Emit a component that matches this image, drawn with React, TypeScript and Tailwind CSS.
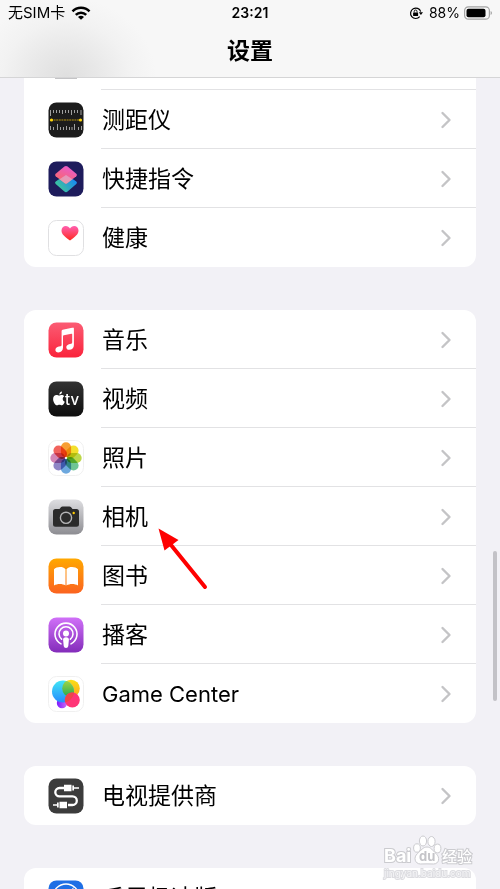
import type { ReactNode } from 'react';

interface SettingsItem {
  label: string;
  icon: ReactNode;
}

/* ---------- app icons ---------- */

function MeasureIcon() {
  return (
    <svg viewBox="0 0 36 36" className="h-9 w-9" aria-hidden="true">
      <rect x="0.5" y="0.5" width="35" height="35" rx="8" fill="#1c1c1c" />
      <path
        d="M2.5 8v6M5.5 8v3M8.5 8v3M11.5 8v3M14.5 8v4M17.5 8v3M20.5 8v3M23.5 8v5M26.5 8v3M29.5 8v3M33 8v5"
        stroke="#a0a0a0"
        strokeWidth="1"
      />
      <path
        d="M2.5 28v-4M5.5 28v-3M9.5 28v-6M12.5 28v-3M15.5 28v-3M18.5 28v-4M21.5 28v-3M24 28v-3M26.5 28v-6M30.5 28v-3M33.5 28v-4"
        stroke="#a0a0a0"
        strokeWidth="1"
      />
      <path d="M3 18h30" stroke="#b8930f" strokeWidth="1" strokeDasharray="2 0.6" />
      <circle cx="3.5" cy="18" r="1.6" fill="#ffd60a" />
      <circle cx="32.5" cy="18" r="1.6" fill="#ffd60a" />
    </svg>
  );
}

function ShortcutsIcon() {
  return (
    <svg viewBox="0 0 36 36" className="h-9 w-9" aria-hidden="true">
      <defs>
        <linearGradient id="sc-low" x1="0" y1="0.8" x2="1" y2="0.2">
          <stop offset="0" stopColor="#3fd08f" />
          <stop offset="0.5" stopColor="#2fa5c4" />
          <stop offset="1" stopColor="#1283ff" />
        </linearGradient>
        <linearGradient id="sc-top" x1="0.2" y1="1" x2="0.7" y2="0">
          <stop offset="0" stopColor="#fb6a5c" />
          <stop offset="1" stopColor="#e95ad0" />
        </linearGradient>
      </defs>
      <rect x="0.5" y="0.5" width="35" height="35" rx="8" fill="#1e1c5c" />
      <path d="M19.500 14.400 28.300 20.600q1.400 1.100 0 2.300L19.600 30.600q-1.600 1.200-3.200 0L7.700 22.900q-1.400-1.200 0-2.300L16.500 14.400q1.500-.8 3 0z" fill="url(#sc-low)" />
      <path d="M19.600 5.600 28.300 12.800q1.400 1.200 0 2.400L19.600 22.100q-1.600 1.200-3.200 0L7.700 15.200q-1.400-1.200 0-2.400L16.400 5.600q1.600-1.200 3.200 0z" fill="url(#sc-top)" />
      <path d="M18 14 24.500 18.200 19.600 22.100q-1.600 1.200-3.200 0L11.500 18.200z" fill="#d9c3e0" opacity="0.55" />
    </svg>
  );
}

function HealthIcon() {
  return (
    <svg viewBox="0 0 36 36" className="h-9 w-9" aria-hidden="true">
      <defs>
        <linearGradient id="heart" x1="0" y1="0" x2="0" y2="1">
          <stop offset="0" stopColor="#ff5fb0" />
          <stop offset="1" stopColor="#ff2a20" />
        </linearGradient>
      </defs>
      <rect x="0.5" y="0.5" width="35" height="35" rx="8" fill="#fff" stroke="#e0e0e2" />
      <path d="M22 20.500c-5-3.500-8.500-6.200-8.500-10 0-2.600 1.900-4.500 4.300-4.500 1.800 0 3.300.9 4.200 2.500C22.900 6.900 24.400 6 26.200 6c2.400 0 4.300 1.900 4.300 4.500 0 3.800-3.500 6.500-8.500 10z" fill="url(#heart)" />
    </svg>
  );
}

function MusicIcon() {
  return (
    <svg viewBox="0 0 36 36" className="h-9 w-9" aria-hidden="true">
      <defs>
        <linearGradient id="music" x1="0" y1="0" x2="0" y2="1">
          <stop offset="0" stopColor="#fb5c74" />
          <stop offset="1" stopColor="#fa233b" />
        </linearGradient>
      </defs>
      <rect x="0.5" y="0.5" width="35" height="35" rx="8" fill="url(#music)" />
      <path d="M25.300 5.500 14.600 7.800q-1 .2-1 1.200v14q0 1-1 1.200l-1.700.4c-2.200.5-3.500 1.700-3.500 3.300 0 1.500 1.200 2.500 2.900 2.500 3 0 4.700-2 4.700-4.800V14.300q0-.8.8-1l7.600-1.600q.8-.2.800.6v8.200q0 1-1 1.200l-1.300.3c-2.200.5-3.600 1.600-3.600 3.200 0 1.600 1.200 2.600 2.900 2.600 2.900 0 4.700-2 4.700-4.800V6.500q0-1.200-1.100-1z" fill="#fff" />
    </svg>
  );
}

function TvIcon() {
  return (
    <svg viewBox="0 0 36 36" className="h-9 w-9" aria-hidden="true">
      <defs>
        <linearGradient id="tv" x1="0" y1="0" x2="0" y2="1">
          <stop offset="0" stopColor="#333" />
          <stop offset="1" stopColor="#0e0e0e" />
        </linearGradient>
      </defs>
      <rect x="0.5" y="0.5" width="35" height="35" rx="8" fill="url(#tv)" />
      <path d="M11.200 14.500c.9 0 1.500-.6 2.500-.6 1 0 2 .5 2.600 1.400-2.300 1.300-1.900 4.600.5 5.500-.6 1.700-1.800 3.500-3 3.500-.9 0-1.300-.5-2.400-.5s-1.500.5-2.400.5c-1.700 0-3.900-3.400-3.900-6.400 0-2.600 1.600-4 3.400-4 1.100 0 1.900.6 2.700.6z" fill="#fff" />
      <path d="M11.300 13.600c-.1-1.700 1.200-3 2.700-3.100.2 1.700-1.300 3.100-2.700 3.100z" fill="#fff" />
      <text x="17" y="24" fontSize="15" fontWeight="500" fill="#fff" fontFamily="Inter, sans-serif">tv</text>
    </svg>
  );
}

const petals = [
  { angle: 0, color: '#f7941d' },
  { angle: 45, color: '#f2dc16' },
  { angle: 90, color: '#b5d334' },
  { angle: 135, color: '#5fbf8a' },
  { angle: 180, color: '#5d9fdb' },
  { angle: 225, color: '#8379c0' },
  { angle: 270, color: '#d07aae' },
  { angle: 315, color: '#f0524b' },
];

function PhotosIcon() {
  return (
    <svg viewBox="0 0 36 36" className="h-9 w-9" aria-hidden="true">
      <rect x="0.5" y="0.5" width="35" height="35" rx="8" fill="#fff" stroke="#f0f0f0" />
      <g transform="translate(18 18)">
        {petals.map((petal) => (
          <rect
            key={petal.angle}
            x="-5.1"
            y="-15.7"
            width="10.2"
            height="15"
            rx="5.1"
            fill={petal.color}
            opacity="0.9"
            transform={`rotate(${petal.angle})`}
            className="mix-blend-multiply"
          />
        ))}
        <circle r="1" fill="#fff" />
      </g>
    </svg>
  );
}

function CameraIcon() {
  return (
    <svg viewBox="0 0 36 36" className="h-9 w-9" aria-hidden="true">
      <defs>
        <linearGradient id="camera" x1="0" y1="0" x2="0" y2="1">
          <stop offset="0" stopColor="#dedee1" />
          <stop offset="1" stopColor="#8d8d92" />
        </linearGradient>
      </defs>
      <rect x="0.5" y="0.5" width="35" height="35" rx="8" fill="url(#camera)" />
      <path d="M7.500 10h4l1.600-1.900q.6-.6 1.400-.6h7q.8 0 1.400.6L24.500 10h4q2.500 0 2.500 2.500v12.700q0 2.500-2.500 2.500h-21Q5 27.700 5 25.200V12.500Q5 10 7.500 10z" fill="#2b2b2b" />
      <circle cx="18" cy="18.800" r="5.600" fill="none" stroke="#b4b4b6" strokeWidth="1.400" />
      <circle cx="25.700" cy="14" r="1.200" fill="#ffcc00" />
    </svg>
  );
}

function BooksIcon() {
  return (
    <svg viewBox="0 0 36 36" className="h-9 w-9" aria-hidden="true">
      <defs>
        <linearGradient id="books" x1="0" y1="0" x2="0" y2="1">
          <stop offset="0" stopColor="#ffa800" />
          <stop offset="1" stopColor="#fb6320" />
        </linearGradient>
      </defs>
      <rect x="0.5" y="0.5" width="35" height="35" rx="8" fill="url(#books)" />
      <path d="M17.500 11.200C16.300 9.600 14.200 9 12 9c-2.400 0-4.600.7-6 2.200v16.300c1.600-1 3.700-1.500 5.800-1.500 2.200 0 4.200.5 5.700 1.500z" fill="#fff" />
      <path d="M18.500 11.200C19.700 9.600 21.800 9 24 9c2.400 0 4.600.7 6 2.200v16.300c-1.600-1-3.700-1.500-5.800-1.500-2.200 0-4.200.5-5.700 1.500z" fill="#fff" />
    </svg>
  );
}

function PodcastsIcon() {
  return (
    <svg viewBox="0 0 36 36" className="h-9 w-9" aria-hidden="true">
      <defs>
        <linearGradient id="podcasts" x1="0" y1="0" x2="0" y2="1">
          <stop offset="0" stopColor="#d070f8" />
          <stop offset="1" stopColor="#832cba" />
        </linearGradient>
      </defs>
      <rect x="0.5" y="0.5" width="35" height="35" rx="8" fill="url(#podcasts)" />
      <g fill="none" stroke="#fff" strokeWidth="1.600" strokeLinecap="round">
        <path d="M13 26.900a11 11 0 1 1 10 0" />
        <path d="M13.600 22.200a7 7 0 1 1 8.800 0" />
      </g>
      <circle cx="18" cy="16.500" r="3" fill="#fff" />
      <path d="M18 20.300c2 0 3 .9 2.900 2.500l-.6 6.200q-.3 2-2.300 2t-2.300-2l-.6-6.200c-.1-1.600.9-2.500 2.900-2.500z" fill="#fff" />
    </svg>
  );
}

function GameCenterIcon() {
  return (
    <svg viewBox="0 0 36 36" className="h-9 w-9" aria-hidden="true">
      <defs>
        <linearGradient id="gc-blue" x1="0" y1="0" x2="0" y2="1">
          <stop offset="0" stopColor="#42e6f5" />
          <stop offset="1" stopColor="#268bfd" />
        </linearGradient>
        <linearGradient id="gc-yellow" x1="0" y1="0" x2="0" y2="1">
          <stop offset="0" stopColor="#f9e016" />
          <stop offset="1" stopColor="#ffa31c" />
        </linearGradient>
        <linearGradient id="gc-green" x1="0" y1="0" x2="0" y2="1">
          <stop offset="0" stopColor="#a9d645" />
          <stop offset="1" stopColor="#1faa50" />
        </linearGradient>
        <linearGradient id="gc-purple" x1="0" y1="0" x2="1" y2="0">
          <stop offset="0" stopColor="#7a1cff" />
          <stop offset="1" stopColor="#cf6bf5" />
        </linearGradient>
        <clipPath id="gc-clip">
          <circle cx="15" cy="15.500" r="11" />
        </clipPath>
      </defs>
      <rect x="0.5" y="0.5" width="35" height="35" rx="8" fill="#fff" stroke="#f0f0f0" />
      <circle cx="14" cy="27" r="5.200" fill="url(#gc-purple)" />
      <circle cx="23" cy="12.500" r="8.800" fill="url(#gc-yellow)" />
      <circle cx="15" cy="15.500" r="11" fill="url(#gc-blue)" />
      <circle cx="23" cy="12.500" r="8.800" fill="url(#gc-green)" clipPath="url(#gc-clip)" />
      <circle cx="24.300" cy="24" r="7.500" fill="#ff3577" />
      <circle cx="24.300" cy="24" r="7.500" fill="#ef4549" clipPath="url(#gc-clip)" />
    </svg>
  );
}

function TvProviderIcon() {
  return (
    <svg viewBox="0 0 36 36" className="h-9 w-9" aria-hidden="true">
      <rect x="0.5" y="0.5" width="35" height="35" rx="8" fill="#3c3c3c" />
      <path d="M16 10h-4.500a4.200 4.200 0 0 0 0 8.400h13a4.300 4.300 0 0 1 0 8.600H20" fill="none" stroke="#fff" strokeWidth="2.300" />
      <path d="M16 6.800h7.500v6.400H16zM24.300 7.500h1.700v5h-1.700zM26 9.300h5v1.400h-5z" fill="#fff" />
      <path d="M11.500 23.800H19v6.400h-7.500zM9 24.500h1.700v5H9zM5 26.300h4v1.400H5z" fill="#fff" />
    </svg>
  );
}

function BrowserIcon() {
  return (
    <svg viewBox="0 0 36 36" className="h-9 w-9" aria-hidden="true">
      <rect x="0.5" y="0.5" width="35" height="35" rx="8" fill="#1f6fe5" />
      <circle cx="18" cy="17" r="13" fill="none" stroke="#fff" strokeWidth="1.300" />
      <path d="M26 7 20.500 21 16 16z" fill="#fff" />
    </svg>
  );
}

/* ---------- list ---------- */

const groups: SettingsItem[][] = [
  [
    { label: '测距仪', icon: <MeasureIcon /> },
    { label: '快捷指令', icon: <ShortcutsIcon /> },
    { label: '健康', icon: <HealthIcon /> },
  ],
  [
    { label: '音乐', icon: <MusicIcon /> },
    { label: '视频', icon: <TvIcon /> },
    { label: '照片', icon: <PhotosIcon /> },
    { label: '相机', icon: <CameraIcon /> },
    { label: '图书', icon: <BooksIcon /> },
    { label: '播客', icon: <PodcastsIcon /> },
    { label: 'Game Center', icon: <GameCenterIcon /> },
  ],
  [{ label: '电视提供商', icon: <TvProviderIcon /> }],
  [{ label: '千里极速版', icon: <BrowserIcon /> }],
];

function SettingsRow({ item, last }: { item: SettingsItem; last: boolean }) {
  // Latin labels run wider than the Chinese ones at the same size
  const isLatin = /^[A-Za-z ]+$/.test(item.label);

  return (
    <li>
      <button type="button" className="flex h-[59px] w-full items-center pl-6 text-left">
        {item.icon}
        <span
          className={`ml-[17px] flex h-full flex-1 items-center justify-between pt-px pr-6 pl-px ${
            last ? '' : 'border-b border-[#e2e2e4]'
          }`}
        >
          <span className={`leading-8 ${isLatin ? 'text-[22px]' : 'text-[23px]'}`}>{item.label}</span>
          <svg viewBox="0 0 12 18" className="h-[18px] w-3" fill="none" aria-hidden="true">
            <path d="M2.500 2 9.500 9 2.500 16" stroke="#c4c4c6" strokeWidth="2.400" strokeLinecap="round" strokeLinejoin="round" />
          </svg>
        </span>
      </button>
    </li>
  );
}

function StatusBar() {
  return (
    <div className="grid h-[26px] grid-cols-3 items-center px-2">
      <div className="flex items-center gap-1.5">
        <span className="text-[15px]">无SIM卡</span>
        <svg viewBox="0 0 20 14" className="h-[14px] w-5" aria-hidden="true">
          <g fill="none" stroke="#000" strokeWidth="2.500">
            <path d="M1.500 5.400a11.900 11.900 0 0 1 17 0" />
            <path d="M4.800 8.900a7.300 7.300 0 0 1 10.400 0" />
          </g>
          <path d="M10 13.800 7 10.900a4.200 4.200 0 0 1 6 0z" fill="#000" />
        </svg>
      </div>
      <span className="text-center text-sm font-semibold">23:21</span>
      <div className="flex items-center justify-end gap-1">
        <svg viewBox="0 0 14 14" className="mr-0.5 h-[14px] w-[14px]" aria-hidden="true">
          <path d="M11.700 5.600A5.200 5.200 0 1 0 10.700 10.700" fill="none" stroke="#000" strokeWidth="1.200" />
          <path d="M9.800 6.200h4.200L11.900 9z" fill="#000" />
          <rect x="4.100" y="6.500" width="5" height="3.600" rx="0.500" fill="#000" />
          <path d="M5.200 6.500V5.400a1.400 1.400 0 0 1 2.800 0v1.100" fill="none" stroke="#000" strokeWidth="0.900" />
        </svg>
        <span className="text-sm">88%</span>
        <svg viewBox="0 0 28 14" className="h-[14px] w-7" aria-hidden="true">
          <rect x="0.600" y="0.800" width="24.800" height="12.400" rx="3.800" fill="none" stroke="#a3a3a3" strokeWidth="1.200" />
          <rect x="2.500" y="2.700" width="19" height="8.600" rx="2" fill="#000" />
          <path d="M26.600 5q1.400.6 1.400 2t-1.400 2z" fill="#a3a3a3" />
        </svg>
      </div>
    </div>
  );
}

function Watermark() {
  return (
    <div className="absolute right-[26px] bottom-2 h-[46px] w-[92px]" aria-hidden="true">
      <svg viewBox="0 0 92 46" className="h-full w-full">
        <g fill="#fff" stroke="#cbcbcf" strokeWidth="1">
          <ellipse cx="35" cy="13" rx="3.400" ry="4.200" />
          <ellipse cx="41" cy="6" rx="3.600" ry="5" />
          <ellipse cx="49.500" cy="6.500" rx="3.600" ry="5" />
          <ellipse cx="55.500" cy="13.500" rx="3.400" ry="4.400" />
          <path d="M45 12c4 0 5.500 3.500 9 6.500 4.500 4 3 10.500-2.500 10.500-4 0-9-.3-13 0-5.500 0-7.500-6.500-3-10.500 3.500-3 5.500-6.500 9.500-6.500z" />
          <g fontFamily="Inter, 'Noto Sans CJK SC', sans-serif" fontWeight="700" paintOrder="stroke" strokeWidth="2">
            <text x="2" y="27" fontSize="18">Bai</text>
            <text x="37" y="26" fontSize="13" fill="#c4c4c8" stroke="none">du</text>
            <text x="60" y="27" fontSize="15" fontWeight="500">经验</text>
            <text x="2" y="42" fontSize="10" fontWeight="400" fill="#f4f4f6" stroke="#dcdce0">jingyan.baidu.com</text>
          </g>
        </g>
      </svg>
    </div>
  );
}

export default function App() {
  return (
    <div className="relative flex h-screen flex-col overflow-hidden bg-[#f2f1f6] font-['Inter','Noto_Sans_CJK_SC',sans-serif] text-black">
      <header className="shrink-0 border-b border-[#d5d5d6] bg-[#f7f7f7] bg-[radial-gradient(ellipse_90px_80px_at_66px_77px,#dfdfdf,#e8e8e8_35%,#f2f2f2_70%,#f7f7f7)]">
        <StatusBar />
        <h1 className="flex h-[51px] items-center justify-center text-[23px] font-bold">设置</h1>
      </header>

      <main className="flex flex-col gap-[43px] px-6">
        {groups.map((items, index) => (
          <ul
            key={items[0].label}
            className={`shrink-0 overflow-hidden bg-white ${index === 0 ? 'rounded-b-xl' : 'rounded-xl'}`}
          >
            {/* tail of the row that is scrolled under the header */}
            {index === 0 && (
              <li className="flex h-3 pl-[31px]">
                <span className="h-px w-[22px] bg-[#c4c4c6]" />
                <span className="ml-6 flex-1 border-b border-[#e2e2e4]" />
              </li>
            )}
            {items.map((item, i) => (
              <SettingsRow key={item.label} item={item} last={i === items.length - 1} />
            ))}
          </ul>
        ))}
      </main>

      {/* scroll indicator */}
      <div className="absolute top-[551px] right-[3px] h-[150px] w-1 rounded-full bg-[#c3c2c7]" />

      {/* pointer to the camera row */}
      <svg viewBox="0 0 50 62" className="absolute top-[528px] left-[158px] h-[62px] w-[50px]" aria-hidden="true">
        <path d="M13 17 47 59" stroke="#fe0000" strokeWidth="4" strokeLinecap="round" />
        <path d="M0.500 0.500 20.500 12 6.500 22.500z" fill="#fe0000" />
      </svg>

      <Watermark />
    </div>
  );
}
